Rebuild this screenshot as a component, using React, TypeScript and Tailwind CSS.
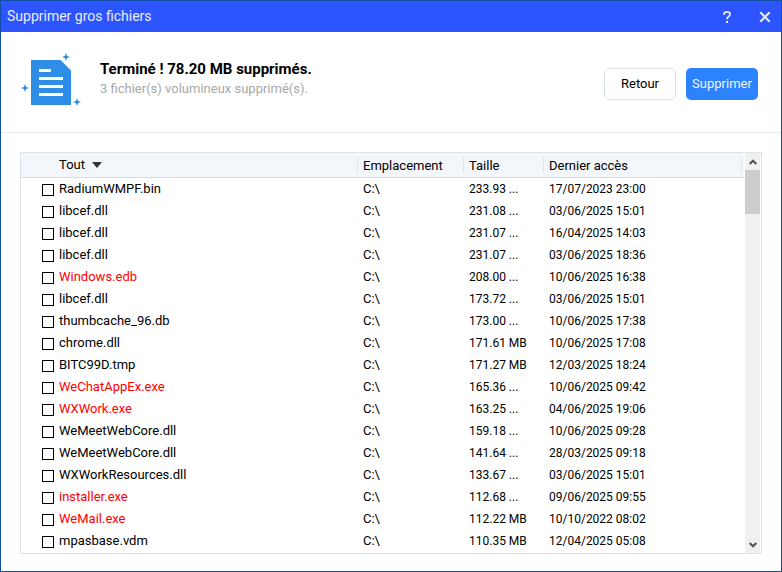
import { useState } from "react";
import clsx from "clsx";

const files = [
  { name: "RadiumWMPF.bin", size: "233.93 ...", date: "17/07/2023 23:00" },
  { name: "libcef.dll", size: "231.08 ...", date: "03/06/2025 15:01" },
  { name: "libcef.dll", size: "231.07 ...", date: "16/04/2025 14:03" },
  { name: "libcef.dll", size: "231.07 ...", date: "03/06/2025 18:36" },
  { name: "Windows.edb", size: "208.00 ...", date: "10/06/2025 16:38", locked: true },
  { name: "libcef.dll", size: "173.72 ...", date: "03/06/2025 15:01" },
  { name: "thumbcache_96.db", size: "173.00 ...", date: "10/06/2025 17:38" },
  { name: "chrome.dll", size: "171.61 MB", date: "10/06/2025 17:08" },
  { name: "BITC99D.tmp", size: "171.27 MB", date: "12/03/2025 18:24" },
  { name: "WeChatAppEx.exe", size: "165.36 ...", date: "10/06/2025 09:42", locked: true },
  { name: "WXWork.exe", size: "163.25 ...", date: "04/06/2025 19:06", locked: true },
  { name: "WeMeetWebCore.dll", size: "159.18 ...", date: "10/06/2025 09:28" },
  { name: "WeMeetWebCore.dll", size: "141.64 ...", date: "28/03/2025 09:18" },
  { name: "WXWorkResources.dll", size: "133.67 ...", date: "03/06/2025 15:01" },
  { name: "installer.exe", size: "112.68 ...", date: "09/06/2025 09:55", locked: true },
  { name: "WeMail.exe", size: "112.22 MB", date: "10/10/2022 08:02", locked: true },
  { name: "mpasbase.vdm", size: "110.35 MB", date: "12/04/2025 05:08" },
];

const FileIcon = () => (
  <svg className="mb-1" width="60" height="54" viewBox="0 0 60 54" aria-hidden="true">
    <path d="M10 7h29.500l10.500 10.500V52H10z" fill="#2e8de6" />
    <path d="M18 16h12v3H18zM18 24h24v3H18zM18 32h24v3H18zM18 40h24v3H18z" fill="#fff" />
    <g fill="#1f88e8">
      <path d="M45 0l1 3 3 1-3 1-1 3-1-3-3-1 3-1z" />
      <path d="M4 31l1 3 3 1-3 1-1 3-1-3-3-1 3-1z" />
      <path d="M56 45l1 3 3 1-3 1-1 3-1-3-3-1 3-1z" />
    </g>
  </svg>
);

const TitleBar = () => (
  <header className="flex h-[31px] shrink-0 items-center justify-between bg-[#2d55ff] pr-[10px] pl-[6px] text-[#e8ecff]">
    <h1 className="text-[14px]">Supprimer gros fichiers</h1>
    <div className="flex items-center gap-[26px]">
      <button type="button" aria-label="Aide" className="grid size-[12px] place-items-center">
        <svg width="10" height="12" viewBox="0 0 10 12" fill="none" stroke="currentColor" strokeWidth="1.8">
          <path d="M2 4V3.200C2 1.700 3.200.9 5 .9s3 .9 3 2.300c0 1.300-.8 1.900-1.700 2.500C5.400 6.300 5 6.800 5 8.200" />
          <path d="M4 11h2" strokeWidth="2" />
        </svg>
      </button>
      <button type="button" aria-label="Fermer" className="grid size-[12px] place-items-center">
        <svg width="12" height="12" viewBox="0 0 12 12" fill="none" stroke="currentColor" strokeWidth="2">
          <path d="M1.300 1.300l9.400 9.400M10.700 1.300L1.300 10.700" />
        </svg>
      </button>
    </div>
  </header>
);

const ScrollBar = () => (
  <div className="flex w-[16px] shrink-0 flex-col items-stretch border-r border-white bg-[#f0f0f0]">
    <button type="button" aria-label="Défiler vers le haut" className="grid h-[17px] place-items-center">
      <svg width="8" height="6" viewBox="0 0 8 6" fill="none" stroke="#505050" strokeWidth="2">
        <path d="M.7 5L4 1.700 7.300 5" />
      </svg>
    </button>
    <div className="h-[44px] bg-[#cdcdcd]" />
    <button type="button" aria-label="Défiler vers le bas" className="mt-auto grid h-[17px] place-items-center">
      <svg width="8" height="6" viewBox="0 0 8 6" fill="none" stroke="#505050" strokeWidth="2">
        <path d="M.7 1L4 4.300 7.300 1" />
      </svg>
    </button>
  </div>
);

const Column = ({ label, className }: { label: string; className?: string }) => (
  <th scope="col" className={clsx("border-b border-[#d5deeb] p-0 text-left font-normal", className)}>
    <div className="h-4 border-r border-[#dfe6f0] pl-[5px] leading-[18px]">{label}</div>
  </th>
);

export default function App() {
  const [checked, setChecked] = useState<number[]>([]);

  const toggle = (i: number) =>
    setChecked((prev) => (prev.includes(i) ? prev.filter((n) => n !== i) : [...prev, i]));

  return (
    <div className="flex h-screen flex-col border border-[#124fa6] bg-white font-['Roboto','Liberation_Sans',sans-serif] text-[13px] text-black">
      <TitleBar />

      <section className="flex h-[101px] shrink-0 items-center border-b border-[#e6ebf3] pr-[23px] pl-5">
        <FileIcon />
        <div className="ml-[19px] pb-[6px]">
          <h2 className="text-[15px] leading-5 font-bold">Terminé ! 78.20 MB supprimés.</h2>
          <p className="leading-5 text-[#a8a8a8]">3 fichier(s) volumineux supprimé(s).</p>
        </div>
        <div className="ml-auto flex gap-[10px] pt-[4px]">
          <button type="button" className="h-8 w-[72px] rounded-[5px] border border-[#d9dfeb] bg-white">
            Retour
          </button>
          <button type="button" className="h-8 w-[72px] rounded-[5px] bg-[#2d82ff] text-[#eef5ff]">
            Supprimer
          </button>
        </div>
      </section>

      <main className="mx-[19px] mt-[19px] mb-[17px] flex min-h-0 flex-1 overflow-hidden border border-[#dde2ec]">
        <div className="mr-px min-w-0 flex-1">
          <table className="w-full table-fixed border-separate border-spacing-0">
            <thead className="bg-[#f3f6fb]">
              <tr className="h-[25px]">
                <th scope="col" className="w-[337px] border-b border-[#d5deeb] p-0 text-left font-normal">
                  <div className="flex h-4 items-center gap-[7px] border-r border-[#dfe6f0] pl-[38px]">
                    <span className="leading-[18px]">Tout</span>
                    <svg width="10" height="6" viewBox="0 0 10 6" fill="#333">
                      <path d="M0 0h10L5 6z" />
                    </svg>
                  </div>
                </th>
                <Column label="Emplacement" className="w-[106px]" />
                <Column label="Taille" className="w-[80px]" />
                <Column label="Dernier accès" className="pr-[2px]" />
              </tr>
            </thead>
            <tbody>
              {files.map((file, i) => (
                <tr key={i} className="h-[22px] leading-[22px] whitespace-nowrap">
                  <td className="p-0">
                    <label className={clsx("flex h-[22px] items-start gap-[5px] pl-[21px]", file.locked && "text-[#ff0000]")}>
                      <input
                        type="checkbox"
                        checked={checked.includes(i)}
                        onChange={() => toggle(i)}
                        className="mt-[6px] size-3 appearance-none border border-black bg-white checked:bg-black"
                      />
                      {file.name}
                    </label>
                  </td>
                  <td className="p-0 pl-[5px]">C:\</td>
                  <td className="p-0 pl-[5px] text-xs leading-[22px]">{file.size}</td>
                  <td className="p-0 pl-[5px] text-xs leading-[22px]">{file.date}</td>
                </tr>
              ))}
            </tbody>
          </table>
        </div>
        <ScrollBar />
      </main>
    </div>
  );
}
